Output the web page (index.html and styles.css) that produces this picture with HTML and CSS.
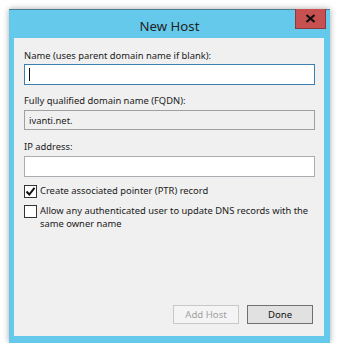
FILE: index.html
```html
<!DOCTYPE html>
<html lang="en">
<head>
    <meta charset="UTF-8">
    <title>New Host</title>
    <link rel="stylesheet" href="styles.css">
</head>
<body>
    <div class="window">
        <div class="titlebar">
            <span class="title">New Host</span>
            <div class="close-btn">
                <svg width="11" height="9" viewBox="0 0 11 9">
                    <path d="M1.5 1 L9.5 8 M9.5 1 L1.5 8" stroke="#111" stroke-width="2.2" fill="none"/>
                </svg>
            </div>
        </div>

        <div class="client">
            <label class="field-label first">Name (uses parent domain name if blank):</label>
            <div class="textbox focused"><span class="caret"></span></div>

            <label class="field-label">Fully qualified domain name (FQDN):</label>
            <div class="textbox readonly">ivanti.net.</div>

            <label class="field-label ip">IP address:</label>
            <div class="textbox"></div>

            <div class="check-row first-check">
                <span class="checkbox">
                    <svg width="11" height="11" viewBox="0 0 11 11">
                        <path d="M1.5 5.5 L4.3 8.5 L9.5 1.8" stroke="#111" stroke-width="2" fill="none"/>
                    </svg>
                </span>
                <span class="check-text">Create associated pointer (PTR) record</span>
            </div>

            <div class="check-row">
                <span class="checkbox"></span>
                <span class="check-text">Allow any authenticated user to update DNS records with the same owner name</span>
            </div>

            <div class="buttons">
                <button class="btn disabled">Add Host</button>
                <button class="btn default">Done</button>
            </div>
        </div>
    </div>
</body>
</html>
```

FILE: styles.css
```css
body {
    margin: 0;
    background: #ffffff;
    font-family: "Noto Sans", "Open Sans", sans-serif;
    font-size: 9.4px;
    color: #1a1a1a;
}
.window {
    position: relative;
    margin: 9px 0 0 9px;
    width: 321px;
    height: 334px;
    background: #65c9ec;
    box-shadow: 0 0 6px rgba(0, 0, 0, 0.35);
    border-top: 1px solid #4d7f93;
    box-sizing: border-box;
    display: flex;
    flex-direction: column;
}
.titlebar {
    height: 28px;
    display: flex;
    align-items: center;
    justify-content: center;
}
.title {
    font-size: 13.2px;
    color: #222;
    margin-top: 3px;
}
.close-btn {
    position: absolute;
    top: -1px;
    right: 4px;
    width: 31px;
    height: 20px;
    background: #c75050;
    border: 1px solid #8a3a3a;
    border-top: none;
    box-sizing: border-box;
    display: flex;
    align-items: center;
    justify-content: center;
}
.client {
    margin: 0 6px 7px 5px;
    flex: 1;
    background: #f0f0f0;
    padding: 11px 9px 12px 10px;
    display: flex;
    flex-direction: column;
}
.field-label {
    display: block;
    line-height: 14px;
    margin: 9px 0 2px;
}
.field-label.first {
    margin-top: 0;
    margin-bottom: 1px;
}
.field-label.ip {
    margin-top: 10px;
}
.textbox {
    height: 21px;
    border: 1px solid #abadb3;
    background: #fff;
    box-sizing: border-box;
    padding: 0 4px;
    line-height: 19px;
    display: flex;
    align-items: center;
}
.textbox.focused {
    border-color: #3c7fb1;
}
.textbox.readonly {
    height: 20px;
    background: #f0f0f0;
    border-color: #a0a0a0;
}
.caret {
    width: 1px;
    height: 13px;
    background: #111;
}
.check-row {
    display: flex;
    align-items: flex-start;
    margin-top: 7px;
    line-height: 12.5px;
}
.check-row.first-check {
    margin-top: 8px;
}
.checkbox {
    width: 13px;
    height: 13px;
    border: 1px solid #333;
    background: #fff;
    box-sizing: border-box;
    flex: none;
    display: flex;
    align-items: center;
    justify-content: center;
    margin-right: 3px;
}
.buttons {
    margin-top: auto;
    display: flex;
    justify-content: flex-end;
    gap: 8px;
    padding-right: 2px;
}
.btn {
    width: 66px;
    height: 19px;
    font-family: inherit;
    font-size: 9.6px;
    padding: 0;
    box-sizing: border-box;
}
.btn.disabled {
    background: #f4f4f4;
    border: 1px solid #c8c8c8;
    color: #a0a0a0;
}
.btn.default {
    background: #e1e1e1;
    border: 1px solid #707070;
    color: #111;
}
```
